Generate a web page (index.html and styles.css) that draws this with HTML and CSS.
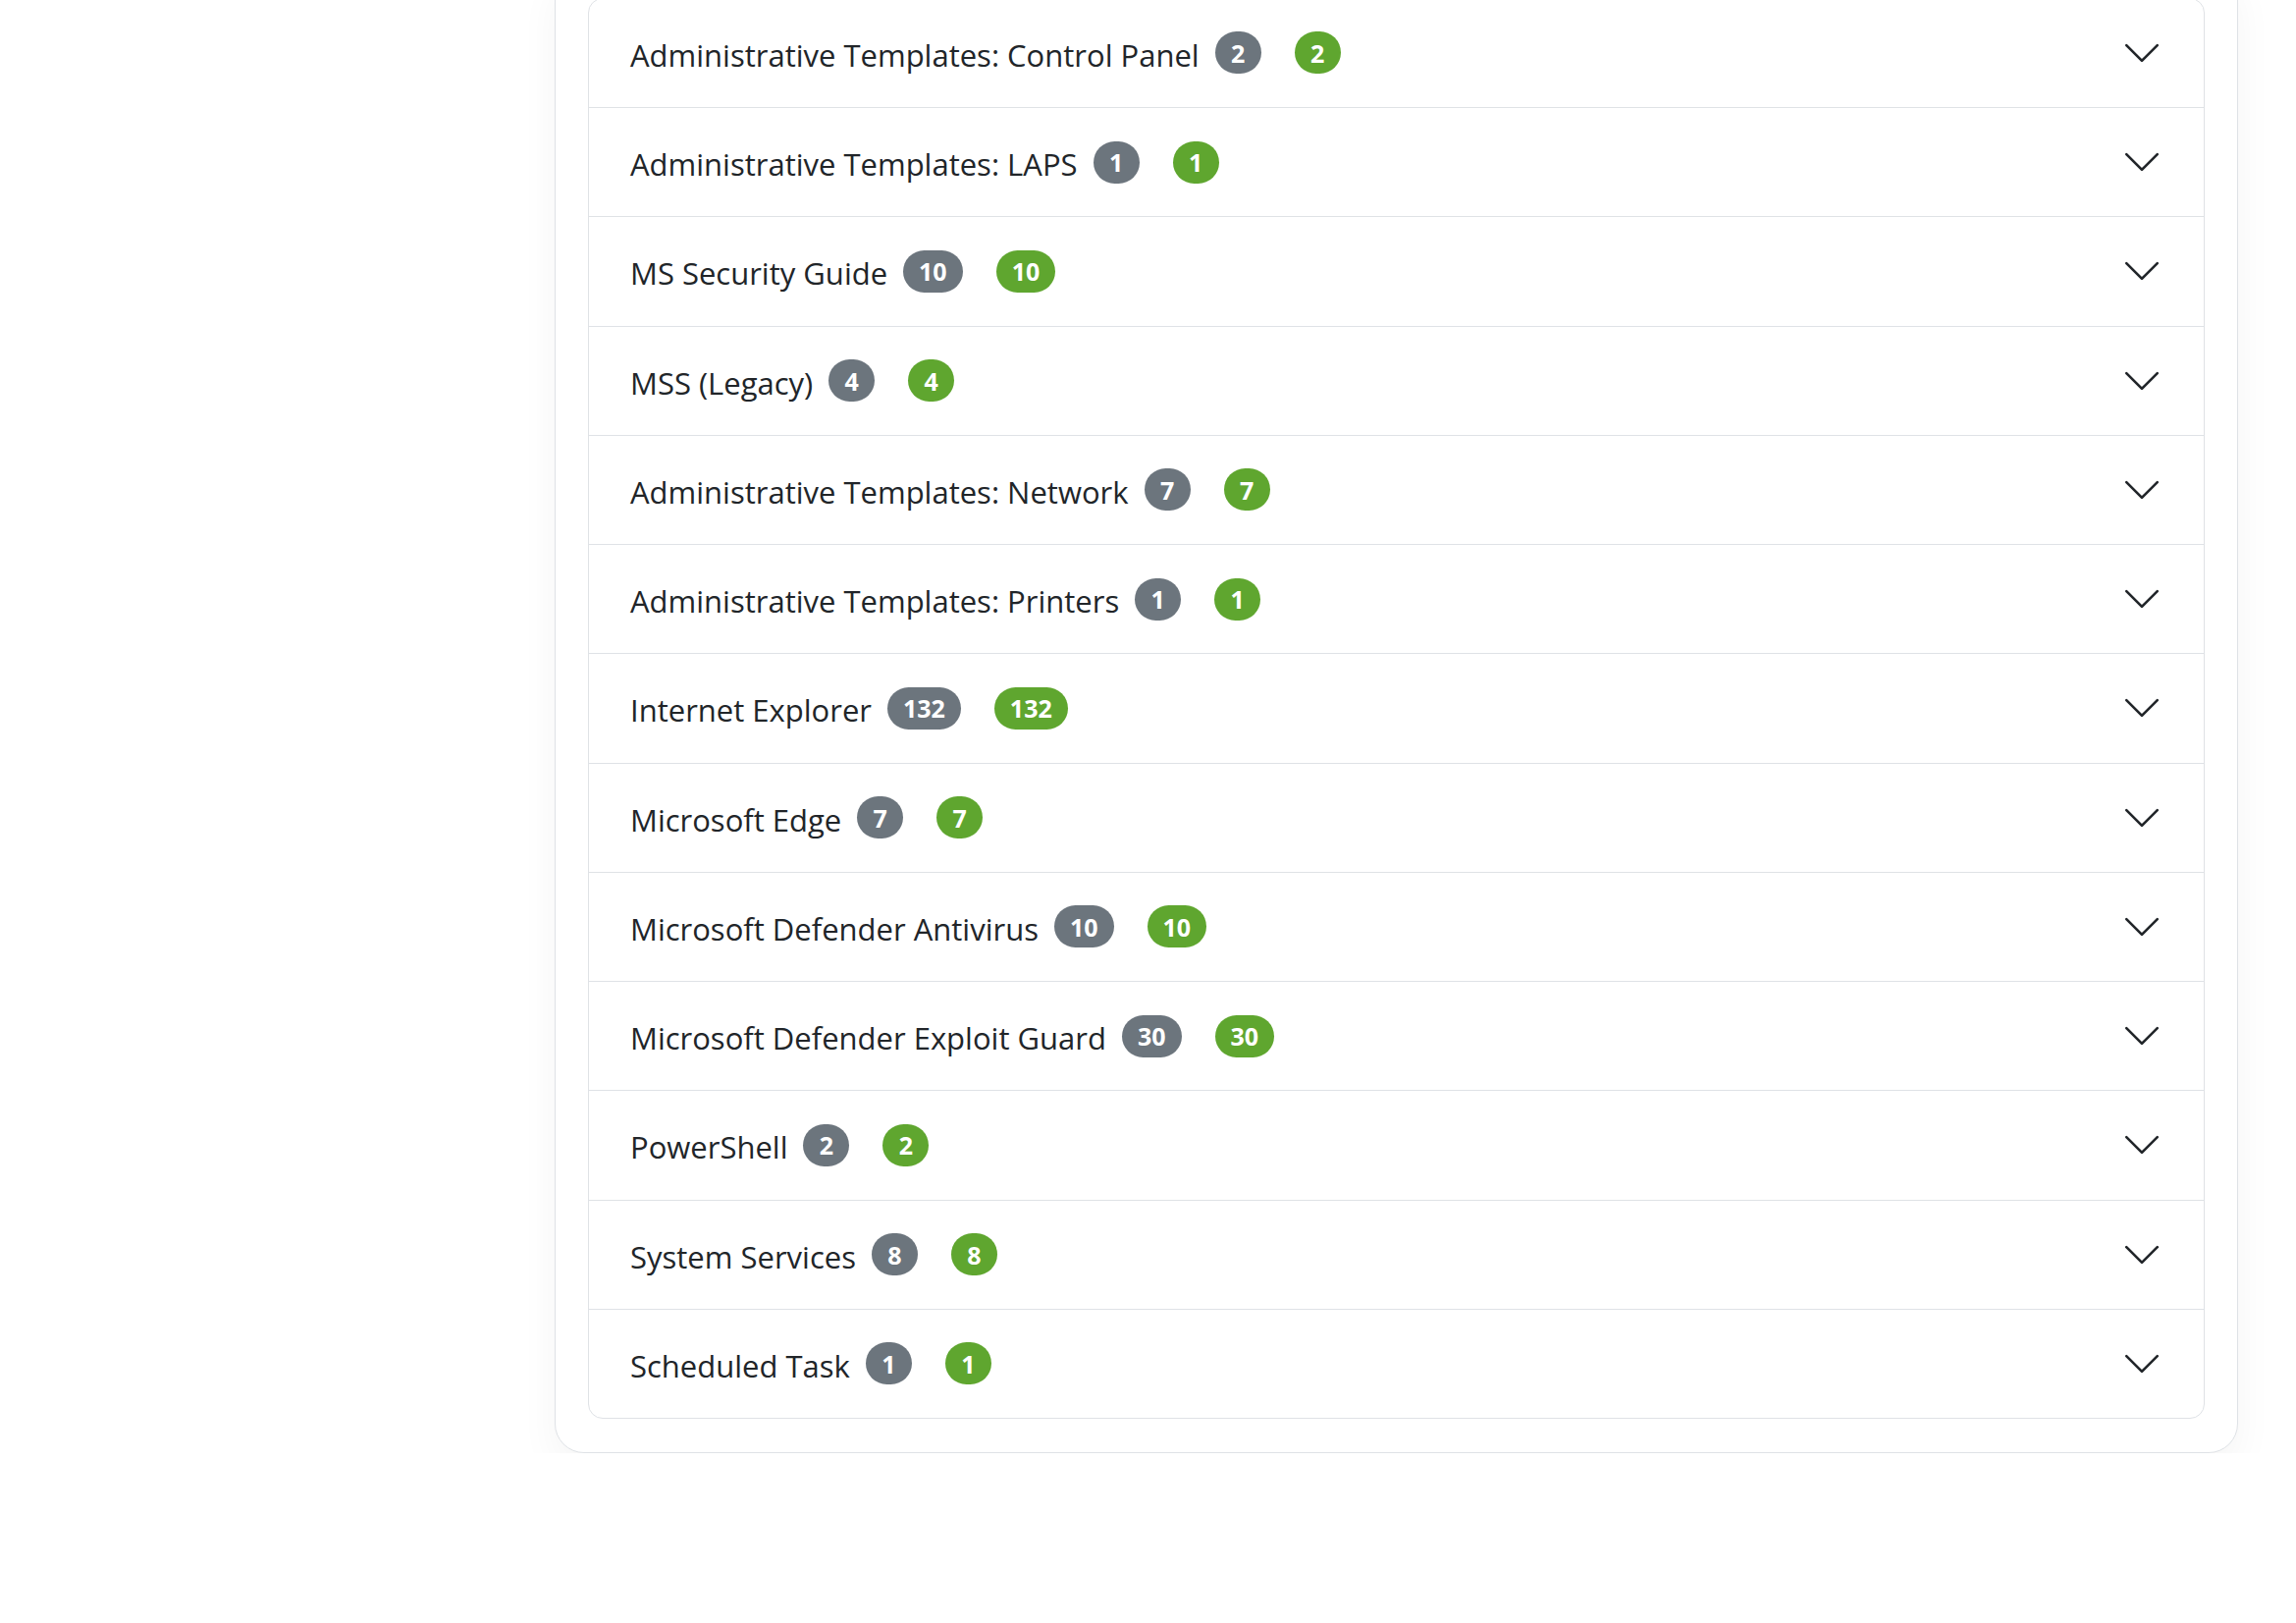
FILE: index.html
```html
<!DOCTYPE html>
<html lang="en">
<head>
	<meta charset="UTF-8">
	<title>Benchmark sections</title>
	<link rel="stylesheet" href="styles.css">
</head>
<body>
	<div class="panel">
		<div class="accordion">
			<div class="acc-item">
				<div class="acc-btn"><span class="acc-title">Administrative Templates: Control Panel</span><span class="badge badge-gray">2</span><span class="badge badge-green">2</span><svg class="chevron" viewBox="0 0 16 16"><path d="M1.646 4.646a.5.5 0 0 1 .708 0L8 10.293l5.646-5.647a.5.5 0 0 1 .708.708l-6 6a.5.5 0 0 1-.708 0l-6-6a.5.5 0 0 1 0-.708z"/></svg></div>
			</div>
			<div class="acc-item">
				<div class="acc-btn"><span class="acc-title">Administrative Templates: LAPS</span><span class="badge badge-gray">1</span><span class="badge badge-green">1</span><svg class="chevron" viewBox="0 0 16 16"><path d="M1.646 4.646a.5.5 0 0 1 .708 0L8 10.293l5.646-5.647a.5.5 0 0 1 .708.708l-6 6a.5.5 0 0 1-.708 0l-6-6a.5.5 0 0 1 0-.708z"/></svg></div>
			</div>
			<div class="acc-item">
				<div class="acc-btn"><span class="acc-title">MS Security Guide</span><span class="badge badge-gray">10</span><span class="badge badge-green">10</span><svg class="chevron" viewBox="0 0 16 16"><path d="M1.646 4.646a.5.5 0 0 1 .708 0L8 10.293l5.646-5.647a.5.5 0 0 1 .708.708l-6 6a.5.5 0 0 1-.708 0l-6-6a.5.5 0 0 1 0-.708z"/></svg></div>
			</div>
			<div class="acc-item">
				<div class="acc-btn"><span class="acc-title">MSS (Legacy)</span><span class="badge badge-gray">4</span><span class="badge badge-green">4</span><svg class="chevron" viewBox="0 0 16 16"><path d="M1.646 4.646a.5.5 0 0 1 .708 0L8 10.293l5.646-5.647a.5.5 0 0 1 .708.708l-6 6a.5.5 0 0 1-.708 0l-6-6a.5.5 0 0 1 0-.708z"/></svg></div>
			</div>
			<div class="acc-item">
				<div class="acc-btn"><span class="acc-title">Administrative Templates: Network</span><span class="badge badge-gray">7</span><span class="badge badge-green">7</span><svg class="chevron" viewBox="0 0 16 16"><path d="M1.646 4.646a.5.5 0 0 1 .708 0L8 10.293l5.646-5.647a.5.5 0 0 1 .708.708l-6 6a.5.5 0 0 1-.708 0l-6-6a.5.5 0 0 1 0-.708z"/></svg></div>
			</div>
			<div class="acc-item">
				<div class="acc-btn"><span class="acc-title">Administrative Templates: Printers</span><span class="badge badge-gray">1</span><span class="badge badge-green">1</span><svg class="chevron" viewBox="0 0 16 16"><path d="M1.646 4.646a.5.5 0 0 1 .708 0L8 10.293l5.646-5.647a.5.5 0 0 1 .708.708l-6 6a.5.5 0 0 1-.708 0l-6-6a.5.5 0 0 1 0-.708z"/></svg></div>
			</div>
			<div class="acc-item">
				<div class="acc-btn"><span class="acc-title">Internet Explorer</span><span class="badge badge-gray">132</span><span class="badge badge-green">132</span><svg class="chevron" viewBox="0 0 16 16"><path d="M1.646 4.646a.5.5 0 0 1 .708 0L8 10.293l5.646-5.647a.5.5 0 0 1 .708.708l-6 6a.5.5 0 0 1-.708 0l-6-6a.5.5 0 0 1 0-.708z"/></svg></div>
			</div>
			<div class="acc-item">
				<div class="acc-btn"><span class="acc-title">Microsoft Edge</span><span class="badge badge-gray">7</span><span class="badge badge-green">7</span><svg class="chevron" viewBox="0 0 16 16"><path d="M1.646 4.646a.5.5 0 0 1 .708 0L8 10.293l5.646-5.647a.5.5 0 0 1 .708.708l-6 6a.5.5 0 0 1-.708 0l-6-6a.5.5 0 0 1 0-.708z"/></svg></div>
			</div>
			<div class="acc-item">
				<div class="acc-btn"><span class="acc-title">Microsoft Defender Antivirus</span><span class="badge badge-gray">10</span><span class="badge badge-green">10</span><svg class="chevron" viewBox="0 0 16 16"><path d="M1.646 4.646a.5.5 0 0 1 .708 0L8 10.293l5.646-5.647a.5.5 0 0 1 .708.708l-6 6a.5.5 0 0 1-.708 0l-6-6a.5.5 0 0 1 0-.708z"/></svg></div>
			</div>
			<div class="acc-item">
				<div class="acc-btn"><span class="acc-title">Microsoft Defender Exploit Guard</span><span class="badge badge-gray">30</span><span class="badge badge-green">30</span><svg class="chevron" viewBox="0 0 16 16"><path d="M1.646 4.646a.5.5 0 0 1 .708 0L8 10.293l5.646-5.647a.5.5 0 0 1 .708.708l-6 6a.5.5 0 0 1-.708 0l-6-6a.5.5 0 0 1 0-.708z"/></svg></div>
			</div>
			<div class="acc-item">
				<div class="acc-btn"><span class="acc-title">PowerShell</span><span class="badge badge-gray">2</span><span class="badge badge-green">2</span><svg class="chevron" viewBox="0 0 16 16"><path d="M1.646 4.646a.5.5 0 0 1 .708 0L8 10.293l5.646-5.647a.5.5 0 0 1 .708.708l-6 6a.5.5 0 0 1-.708 0l-6-6a.5.5 0 0 1 0-.708z"/></svg></div>
			</div>
			<div class="acc-item">
				<div class="acc-btn"><span class="acc-title">System Services</span><span class="badge badge-gray">8</span><span class="badge badge-green">8</span><svg class="chevron" viewBox="0 0 16 16"><path d="M1.646 4.646a.5.5 0 0 1 .708 0L8 10.293l5.646-5.647a.5.5 0 0 1 .708.708l-6 6a.5.5 0 0 1-.708 0l-6-6a.5.5 0 0 1 0-.708z"/></svg></div>
			</div>
			<div class="acc-item">
				<div class="acc-btn"><span class="acc-title">Scheduled Task</span><span class="badge badge-gray">1</span><span class="badge badge-green">1</span><svg class="chevron" viewBox="0 0 16 16"><path d="M1.646 4.646a.5.5 0 0 1 .708 0L8 10.293l5.646-5.647a.5.5 0 0 1 .708.708l-6 6a.5.5 0 0 1-.708 0l-6-6a.5.5 0 0 1 0-.708z"/></svg></div>
			</div>
		</div>
	</div>
</body>
</html>
```

FILE: styles.css
```css
body {
	margin: 0;
	padding: 0;
	background: #fff;
	color: #212529;
	font-family: "Open Sans", "Noto Sans", sans-serif;
}
/* 页面已向下滚动，卡片顶部在视口外 */
.panel {
	box-sizing: border-box;
	width: 1715px;
	margin: -36.25px 0 0 565px;
	padding: 33px 33px 34px;
	border: 1px solid #dfe2e6;
	border-radius: 30px;
	background: #fff;
	box-shadow: 0 18px 40px rgba(0, 0, 0, .045);
}
.accordion {
	border: 1px solid #dfe2e6;
	border-radius: 15px;
	overflow: hidden;
}
.acc-item + .acc-item {
	border-top: 1px solid #dfe2e6;
}
.acc-btn {
	display: flex;
	align-items: center;
	height: 110.25px;
	padding: 0 42px 0 42px;
}
.acc-title {
	font-size: 31px;
	line-height: 1;
	padding-top: 5px;
}
.badge {
	display: inline-flex;
	align-items: center;
	justify-content: center;
	box-sizing: border-box;
	height: 43px;
	min-width: 47px;
	padding: 0 16px;
	border-radius: 22px;
	color: #fff;
	font-size: 25px;
	font-weight: 700;
}
.badge-gray {
	margin-left: 16px;
	background: #6c757d;
}
.badge-green {
	margin-left: 34px;
	background: #5fa62f;
}
.chevron {
	width: 42px;
	height: 42px;
	margin-left: auto;
	fill: #212529;
}
```
